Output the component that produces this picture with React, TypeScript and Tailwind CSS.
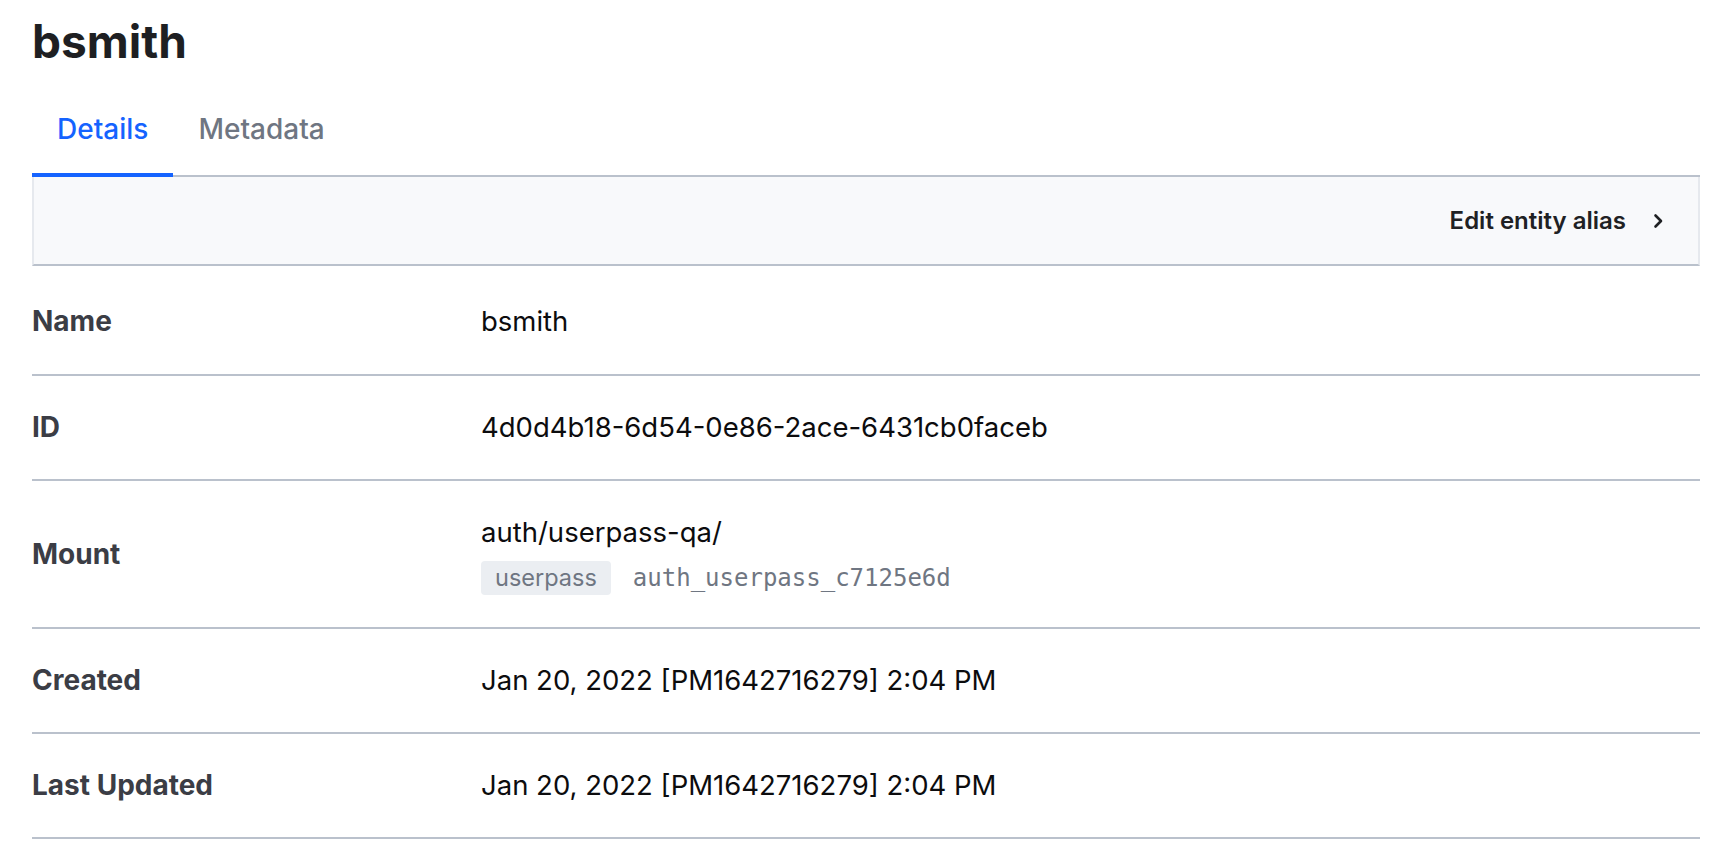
import React from 'react';

const rows: { label: string; value: string }[] = [
  { label: 'Name', value: 'bsmith' },
  { label: 'ID', value: '4d0d4b18-6d54-0e86-2ace-6431cb0faceb' },
];

const dates: { label: string; value: string }[] = [
  { label: 'Created', value: 'Jan 20, 2022 [PM1642716279] 2:04 PM' },
  { label: 'Last Updated', value: 'Jan 20, 2022 [PM1642716279] 2:04 PM' },
];

const ChevronRight = () => (
  <svg width="20" height="20" viewBox="0 0 20 20" fill="none">
    <path d="M7.5 4.5 13 10l-5.5 5.5" stroke="#1f2124" strokeWidth="2.6" strokeLinecap="round" strokeLinejoin="round" />
  </svg>
);

const Row: React.FC<{ label: string; first?: boolean; children: React.ReactNode }> = ({ label, first, children }) => (
  <div
    className={`grid grid-cols-[449px_1fr] items-center border-b-2 border-[#bac1cc] ${
      first ? 'pt-[36px] pb-[33px]' : 'py-[32px]'
    }`}
  >
    <div className="text-[28px] leading-[39px] font-bold text-[#3b3d45]">{label}</div>
    <div className="text-[27.5px] leading-[39px] text-[#0c0c0e]">{children}</div>
  </div>
);

export default function App() {
  return (
    <div className="min-h-screen bg-white pl-8 pr-5 font-['Inter',sans-serif]">
      {/* titre */}
      <h1 className="pt-[15px] text-[46px] leading-[52px] font-bold text-[#1e1f22]">bsmith</h1>

      {/* onglets */}
      <div className="mt-5 flex border-b-2 border-[#bac1cc]">
        <button className="-mb-[2px] border-b-4 border-[#1563ff] px-[25px] pt-[21px] pb-[23px] text-[28px] leading-[42px] font-medium text-[#1563ff]">
          Details
        </button>
        <button className="-mb-[2px] border-b-4 border-transparent px-[25px] pt-[21px] pb-[23px] text-[28px] leading-[42px] font-medium text-[#6f7682]">
          Metadata
        </button>
      </div>

      {/* barre d'actions */}
      <div className="flex h-[89px] items-center justify-end border-x-2 border-b-2 border-x-[#e6e9ee] border-b-[#bac1cc] bg-[#f8f9fb] pr-[30px]">
        <button className="flex items-center gap-[22px] text-[24px] font-semibold text-[#1f2124]">
          <span>Edit entity alias</span>
          <ChevronRight />
        </button>
      </div>

      {rows.map((r, i) => (
        <Row key={r.label} label={r.label} first={i === 0}>
          {r.value}
        </Row>
      ))}

      <Row label="Mount">
        <div>auth/userpass-qa/</div>
        <div className="mt-[9px] flex items-center gap-[22px]">
          <span className="rounded-[4px] bg-[#ebeef2] px-[14px] text-[23.5px] leading-[34px] text-[#6f7682]">
            userpass
          </span>
          <span className="font-['DejaVu_Sans_Mono',monospace] text-[24px] leading-[34px] text-[#6f7682]">
            auth_userpass_c7125e6d
          </span>
        </div>
      </Row>

      {dates.map((r) => (
        <Row key={r.label} label={r.label}>
          {r.value}
        </Row>
      ))}
    </div>
  );
}
